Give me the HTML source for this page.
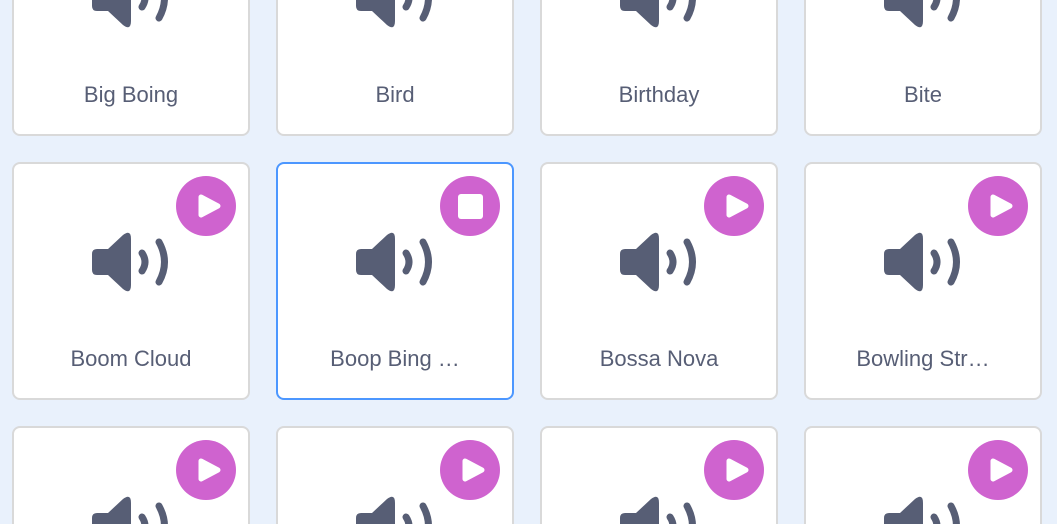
<!DOCTYPE html><html><head><style>
html,body{margin:0;width:1057px;height:524px;overflow:hidden}
body{background:#e9f1fc;font-family:"Liberation Sans",sans-serif;position:relative}
.c{position:absolute;width:234px;height:234px;background:#fff;border:2px solid #d9d9d9;border-radius:8px;box-sizing:content-box}
.c.s{border-color:#4c97ff}
.c svg{position:absolute;left:-2px;top:-2px}
.l{position:absolute;left:0;right:0;top:182px;text-align:center;font-size:22px;color:#575e75}
</style></head><body>
<script>
var names=[["Big Boing","Bird","Birthday","Bite"],["Boom Cloud","Boop Bing …","Bossa Nova","Bowling Str…"],["","","",""]];
var xs=[12,276,540,804],ys=[-102,162,426];
var h="";
for(var r=0;r<3;r++)for(var i=0;i<4;i++){
var sel=(r==1&&i==1);
var btn=r==0?"":'<circle cx="194" cy="44" r="30" fill="#cf63cf"/>'+(sel?'<rect x="182" y="32" width="25" height="25" rx="3" fill="#fff"/>':'<path d="M189 35 L206 44 L189 53Z" fill="#fff" stroke="#fff" stroke-width="5" stroke-linejoin="round"/>');
h+='<div class="c'+(sel?' s':'')+'" style="left:'+xs[i]+'px;top:'+ys[r]+'px"><svg width="238" height="238">'+btn+
'<path d="M85 87 H96 L111 73 Q119 67 119 77 V123 Q119 133 111 127 L96 113 H85 Q80 113 80 108 V92 Q80 87 85 87Z" fill="#575e75"/>'+
'<path d="M130 91 Q136 100 130 109 M147 80 Q158 100 147 120" stroke="#575e75" stroke-width="7" stroke-linecap="round" fill="none"/>'+
'</svg><div class="l">'+names[r][i]+'</div></div>';}
document.write(h);
</script>
</body></html>
